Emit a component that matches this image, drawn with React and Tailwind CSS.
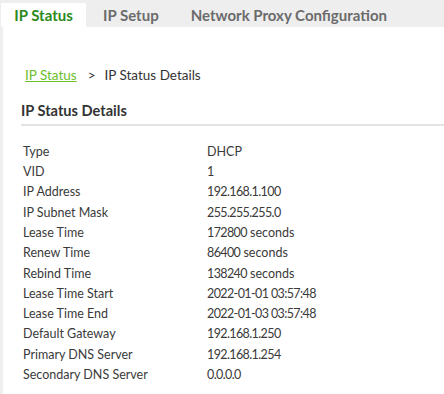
import React from "react";

const rows = [
  ["Type", "DHCP"],
  ["VID", "1"],
  ["IP Address", "192.168.1.100"],
  ["IP Subnet Mask", "255.255.255.0"],
  ["Lease Time", "172800", " seconds"],
  ["Renew Time", "86400", " seconds"],
  ["Rebind Time", "138240", " seconds"],
  ["Lease Time Start", "2022-01-01 03:57:48"],
  ["Lease Time End", "2022-01-03 03:57:48"],
  ["Default Gateway", "192.168.1.250"],
  ["Primary DNS Server", "192.168.1.254"],
  ["Secondary DNS Server", "0.0.0.0"],
];

export default function App() {
  return (
    <div className="w-[444px] h-[394px] overflow-hidden bg-white font-['Lato',sans-serif] flex flex-col">
      <div className="h-[27px] bg-[#eeeeee] flex items-end pl-[1px] shrink-0">
        <div className="h-[24px] w-[85px] bg-white flex items-center justify-center text-[15px] font-bold text-[#2a8a1a]">
          IP Status
        </div>
        <div className="h-[24px] ml-[17px] flex items-center text-[15px] font-bold text-[#6b6b6b]">
          IP Setup
        </div>
        <div className="h-[24px] ml-[32px] flex items-center text-[15px] font-bold text-[#6b6b6b]">
          Network Proxy Configuration
        </div>
      </div>
      <div className="flex-1 flex">
        <div className="w-[3px] bg-[#eeeeee]" />
        <div className="flex-1 pt-[38px]">
          <div className="flex items-center text-[13.5px] text-[#333333] leading-[20px] pl-[22px]">
            <span className="text-[#6bbf2a] underline">IP Status</span>
            <span className="ml-[11px]">&gt;</span>
            <span className="ml-[9px]">IP Status Details</span>
          </div>
          <div className="ml-[18px] mt-[17px] border-b-2 border-[#e3e3e3] pb-[4px]">
            <div className="text-[14.6px] font-bold text-[#333333] leading-[18px]">IP Status Details</div>
          </div>
          <div className="pl-[20px] pt-[16px] text-[12.5px] text-[#3a3a3a]">
            {rows.map(([k, v, s]) => (
              <div key={k} className="flex h-[20.3px] items-center">
                <div className="w-[184px]">{k}</div>
                <div>
                  <span className={k === "Type" ? "" : "tracking-[-0.6px]"}>{v}</span>
                  {s && <span>{s}</span>}
                </div>
              </div>
            ))}
          </div>
        </div>
      </div>
    </div>
  );
}
